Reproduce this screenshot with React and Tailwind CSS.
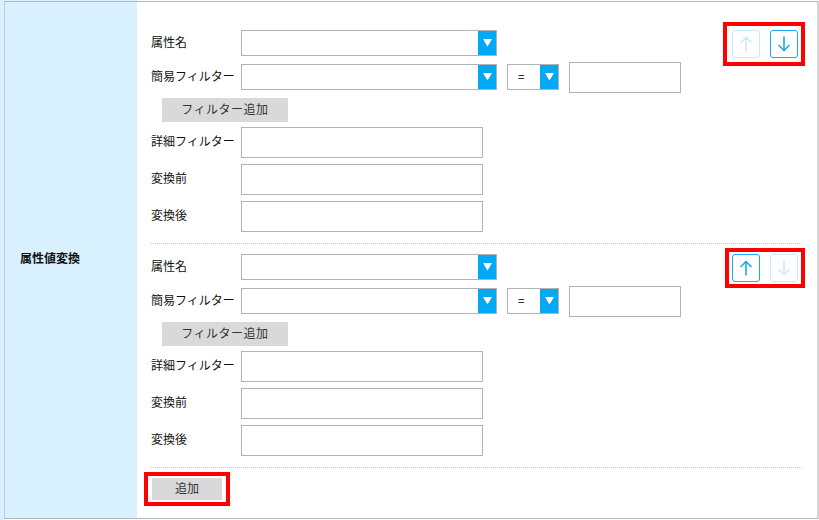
import React from "react";

function Tri() {
  return (
    <svg width="9" height="8" viewBox="0 0 9 8">
      <polygon points="0,0 9,0 4.5,7.5" fill="#ffffff" />
    </svg>
  );
}

function Select({ w = "w-[256px]", children }) {
  return (
    <div className={`flex ${w} h-[26px] border border-[#b3b3b3] bg-white`}>
      <div className="flex-1 flex items-center pl-[10px] pb-[2px] text-[12px] text-black">{children}</div>
      <div className="w-[18px] bg-[#03a9f4] flex items-center justify-center">
        <Tri />
      </div>
    </div>
  );
}

function Arrow({ up, enabled }) {
  const color = enabled ? "#1ea6ee" : "#c9ebfc";
  return (
    <div
      className={`w-[28px] h-[28px] rounded-[3px] bg-white border flex items-center justify-center ${
        enabled ? "border-[#1ea6ee]" : "border-[#c9ebfc]"
      }`}
    >
      <svg width="12" height="16" viewBox="0 0 12 16" fill="none" stroke={color} strokeWidth="1.6" strokeLinecap="round" strokeLinejoin="round">
        {up ? (
          <>
            <path d="M6 15V1.5" />
            <path d="M1 6.5L6 1.5L11 6.5" />
          </>
        ) : (
          <>
            <path d="M6 1V14.5" />
            <path d="M1 9.5L6 14.5L11 9.5" />
          </>
        )}
      </svg>
    </div>
  );
}

function Label({ children }) {
  return <div className="w-[90px] shrink-0 pb-[3px] text-[12px] text-[#111]">{children}</div>;
}

function Input({ w = "w-[242px]" }) {
  return <div className={`${w} h-[31px] border border-[#b3b3b3] bg-white shrink-0`} />;
}

function Block({ first }) {
  return (
    <div className="flex">
      <div className="flex-1 flex flex-col">
        <div className="flex items-center h-[26px]">
          <Label>属性名</Label>
          <Select />
        </div>
        <div className="mt-[8px] flex items-center h-[26px]">
          <Label>簡易フィルター</Label>
          <Select />
          <div className="ml-[10px]">
            <Select w="w-[52px]">=</Select>
          </div>
          <div className="ml-[10px]">
            <Input w="w-[112px]" />
          </div>
        </div>
        <div className="mt-[8px] ml-[11px] w-[126px] h-[24px] pb-[2px] bg-[#d9d9d9] flex items-center justify-center text-[12px] tracking-[0.5px] text-[#333]">
          フィルター追加
        </div>
        <div className="mt-[5px] flex items-center h-[31px]">
          <Label>詳細フィルター</Label>
          <Input />
        </div>
        <div className="mt-[6px] flex items-center h-[31px]">
          <Label>変換前</Label>
          <Input />
        </div>
        <div className="mt-[6px] flex items-center h-[31px]">
          <Label>変換後</Label>
          <Input />
        </div>
      </div>
      <div className="relative self-start mr-[4px] flex gap-[10px]">
        <Arrow up enabled={!first} />
        <Arrow enabled={first} />
        {first ? (
          <div className="absolute left-[-9px] top-[-8px] w-[82px] h-[44px] border-[4px] border-[#ff0000]" />
        ) : (
          <div className="absolute left-[-7px] top-[-6px] w-[80px] h-[40px] border-[4px] border-[#ff0000]" />
        )}
      </div>
    </div>
  );
}

export default function App() {
  return (
    <div className="w-[819px] h-[520px] bg-white font-['Noto_Sans_CJK_JP',sans-serif] overflow-hidden">
      <div className="flex h-[1px]">
        <div className="w-[137px] bg-[#d9f0fe]" />
        <div className="flex-1 bg-white" />
      </div>
      <div className="flex h-[519px]">
        <div className="w-[4px] bg-[#d9f0fe]" />
        <div className="flex h-[518px] w-[815px] border-t border-b border-l border-r-2 border-t-[#a9bac6] border-b-[#a9bac6] border-l-[#bccbd6] border-r-[#d6d6d6]">
          <div className="w-[132px] bg-[#d9f0fe] flex items-center pl-[15px] pb-[4px] text-[12px] font-bold text-[#111]">
            属性値変換
          </div>
          <div className="flex-1 flex flex-col pl-[14px] pr-[15px] pt-[28px]">
            <Block first />
            <div className="mt-[11px] mb-[10px] border-t border-dotted border-[#c4c4c4]" />
            <Block />
            <div className="mt-[11px] mb-[10px] border-t border-dotted border-[#c4c4c4]" />
            <div className="relative ml-[1px] w-[70px] h-[22px] pb-[2px] bg-[#d9d9d9] flex items-center justify-center text-[12px] text-[#333]">
              追加
              <div className="absolute left-[-8px] top-[-6px] w-[86px] h-[34px] border-[4px] border-[#ff0000]" />
            </div>
          </div>
        </div>
      </div>
    </div>
  );
}
